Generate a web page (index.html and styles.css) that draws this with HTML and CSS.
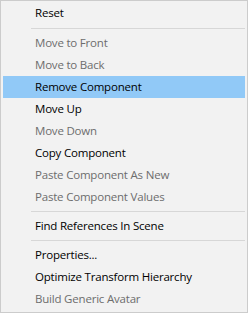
FILE: index.html
```html
<!DOCTYPE html>
<html>
<head>
<meta charset="utf-8">
<link rel="stylesheet" href="styles.css">
</head>
<body>
<div class="menu">
  <div class="item">Reset</div>
  <div class="sep first"></div>
  <div class="item disabled">Move to Front</div>
  <div class="item disabled">Move to Back</div>
  <div class="item active">Remove Component</div>
  <div class="item">Move Up</div>
  <div class="item disabled">Move Down</div>
  <div class="item">Copy Component</div>
  <div class="item disabled">Paste Component As New</div>
  <div class="item disabled">Paste Component Values</div>
  <div class="sep"></div>
  <div class="item">Find References In Scene</div>
  <div class="sep"></div>
  <div class="item">Properties...</div>
  <div class="item">Optimize Transform Hierarchy</div>
  <div class="item disabled">Build Generic Avatar</div>
</div>
</body>
</html>
```
FILE: styles.css
```css
html, body {
  margin: 0;
  padding: 0;
  background: #f0f0f0;
}
.menu {
  width: 248px;
  height: 313px;
  box-sizing: border-box;
  border: 1px solid #cccccc;
  background: #f2f2f2;
  padding: 1px 2px 2px 2px;
  font-family: "Open Sans", "Noto Sans", sans-serif;
  font-size: 11.5px;
  letter-spacing: -0.2px;
  color: #000;
  display: flex;
  flex-direction: column;
}
.item {
  height: 22px;
  line-height: 22px;
  padding-left: 32px;
  white-space: nowrap;
}
.item.disabled {
  color: #6d6d6d;
}
.item.active {
  background: #91c9f7;
}
.sep {
  padding: 3px 0 3px 28px;
}
.sep.first {
  padding-top: 4px;
}
.sep::before {
  content: "";
  display: block;
  height: 1px;
  background: #d7d7d7;
}
```
